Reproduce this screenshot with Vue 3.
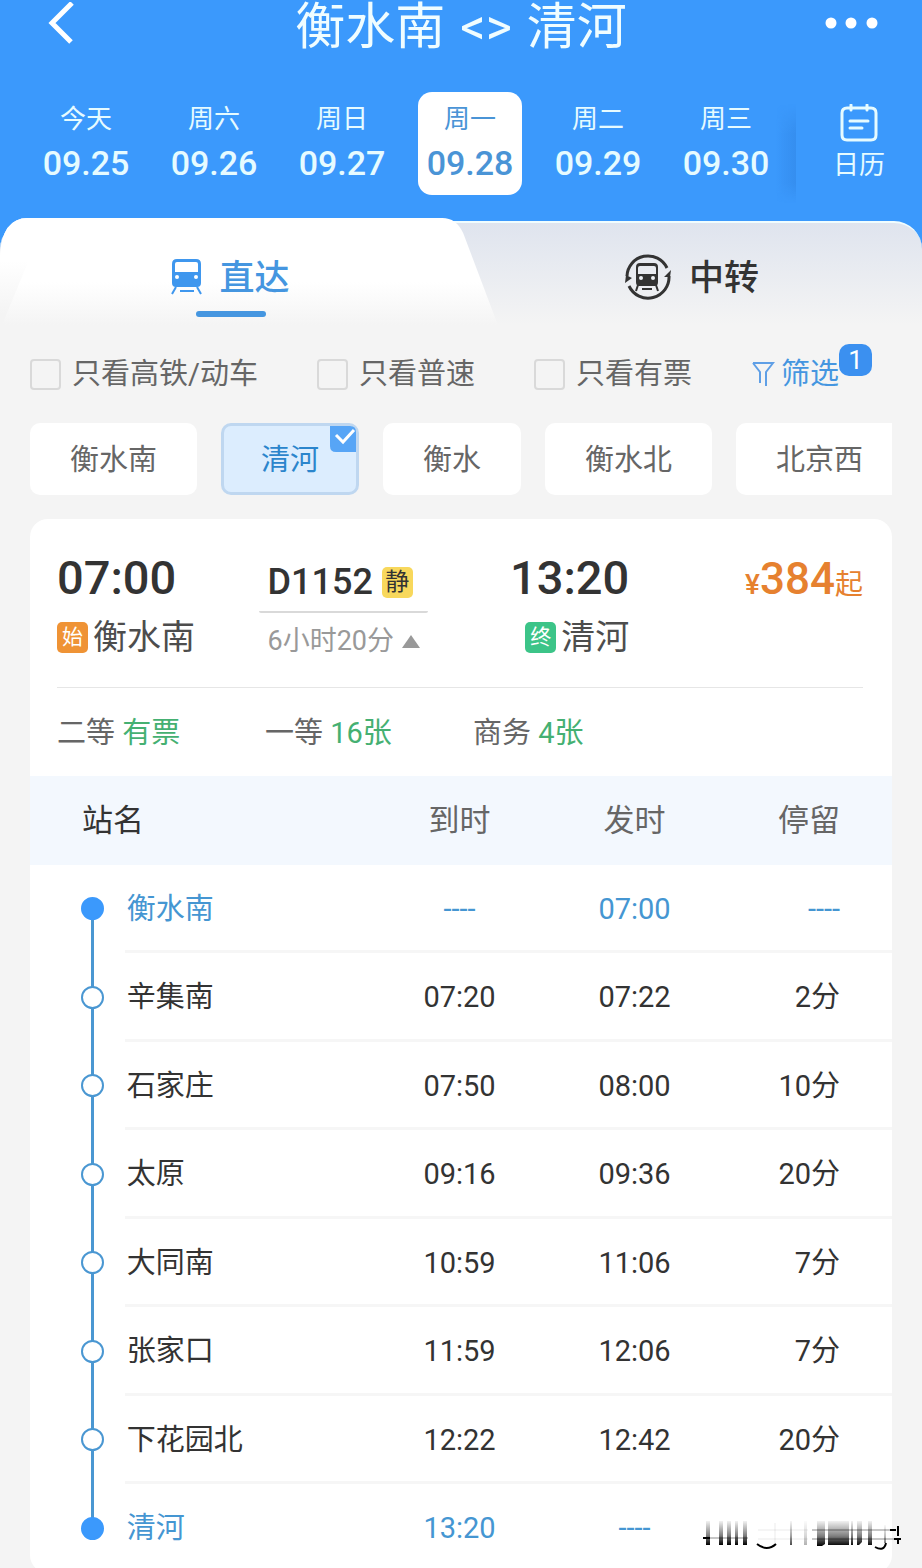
<script setup>
import { ref } from 'vue'

const days = [
  { week: '今天', date: '09.25' },
  { week: '周六', date: '09.26' },
  { week: '周日', date: '09.27' },
  { week: '周一', date: '09.28' },
  { week: '周二', date: '09.29' },
  { week: '周三', date: '09.30' }
]
const activeDay = ref('09.28')

const filters = ref([
  { id: 'fast',   label: '只看高铁/动车', on: false },
  { id: 'normal', label: '只看普速',      on: false },
  { id: 'avail',  label: '只看有票',      on: false }
])

const stations      = ['衡水南', '清河', '衡水', '衡水北', '北京西']
const activeStation = ref('清河')

const seats = [
  { name: '二等', left: '有票' },
  { name: '一等', left: '16张' },
  { name: '商务', left: '4张' }
]

const stops = [
  { name: '衡水南',   arrive: '----',  depart: '07:00', stay: '----', end: true },
  { name: '辛集南',   arrive: '07:20', depart: '07:22', stay: '2分' },
  { name: '石家庄',   arrive: '07:50', depart: '08:00', stay: '10分' },
  { name: '太原',     arrive: '09:16', depart: '09:36', stay: '20分' },
  { name: '大同南',   arrive: '10:59', depart: '11:06', stay: '7分' },
  { name: '张家口',   arrive: '11:59', depart: '12:06', stay: '7分' },
  { name: '下花园北', arrive: '12:22', depart: '12:42', stay: '20分' },
  { name: '清河',     arrive: '13:20', depart: '----',  stay: '',     end: true }
]
</script>

<template>
  <div class="page">
    <header class="header">
      <div class="title-bar">
        <button class="icon-btn" aria-label="返回">
          <svg width="32" height="42" viewBox="0 0 32 42"><path d="M28 1 L8 21 L27 40" fill="none" stroke="#fff" stroke-width="5" /></svg>
        </button>
        <h1 class="title"><span>衡水南</span><span>&lt;&gt;</span><span>清河</span></h1>
        <button class="icon-btn more" aria-label="更多">
          <svg width="54" height="12" viewBox="0 0 54 12" fill="#fff">
            <circle cx="7" cy="6" r="5.5" /><circle cx="27" cy="6" r="5.5" /><circle cx="48" cy="6" r="5.5" />
          </svg>
        </button>
      </div>

      <div class="date-bar">
        <div class="days">
          <button
            v-for="d in days"
            :key="d.date"
            class="day"
            :class="{ active: activeDay === d.date }"
            @click="activeDay = d.date"
          >
            <span class="week">{{ d.week }}</span>
            <span class="date">{{ d.date }}</span>
          </button>
        </div>
        <button class="calendar">
          <svg width="38" height="38" viewBox="0 0 38 38" fill="none" stroke="#e6fbff" stroke-width="3" stroke-linecap="round">
            <path d="M10 4 H7 Q2 4 2 9 V31 Q2 36 7 36 H31 Q36 36 36 31 V9 Q36 4 31 4 H28 M12 4 H26" />
            <path d="M11 1 V6 M27 1 V6" />
            <path d="M10 17 H28 M10 24 H22" />
          </svg>
          <span>日历</span>
        </button>
      </div>
    </header>

    <nav class="tabs">
      <svg class="tab-shape" viewBox="0 0 502 107" preserveAspectRatio="none" aria-hidden="true">
        <defs>
          <linearGradient id="tabFade" x1="0" y1="0" x2="0" y2="1">
            <stop offset="0.6" stop-color="#fff" />
            <stop offset="1" stop-color="#f4f4f4" />
          </linearGradient>
          <linearGradient id="edgeFade" x1="0" y1="0" x2="0" y2="1">
            <stop offset="0.4" stop-color="#fff" />
            <stop offset="0.9" stop-color="#f4f4f4" />
          </linearGradient>
        </defs>
        <path d="M0 38 Q2 0 28 0 H100 V107 H0 Z" fill="url(#edgeFade)" />
        <path d="M0 38 Q2 0 28 0 H446 Q460 0 467 15 L502 107 H2 L30 40 Z" fill="url(#tabFade)" />
      </svg>
      <button class="tab active">
        <span class="tab-label">
          <svg width="31" height="36" viewBox="0 0 31 36">
            <path fill-rule="evenodd" fill="#3f97ee" d="M6 0 H25 Q30 0 30 5 V24 Q30 28 26 28 H5 Q1 28 1 24 V5 Q1 0 6 0 Z M6 3 Q4 3 4 5 V13 H27 V5 Q27 3 25 3 Z" />
            <circle cx="6" cy="18" r="2" fill="#fff" /><circle cx="25" cy="18" r="2" fill="#fff" />
            <path d="M5 28 L1 35 M26 28 L30 35 M9 32 H23" stroke="#3f97ee" stroke-width="2" fill="none" />
          </svg>
          <span>直达</span>
        </span>
        <span class="tab-line"></span>
      </button>
      <button class="tab">
        <span class="tab-label">
          <svg width="48" height="48" viewBox="0 0 48 48">
            <path d="M3 23 A21 21 0 0 1 43 15 M45 23 A21 21 0 0 1 5 33" fill="none" stroke="#333" stroke-width="3" />
            <path d="M1 30 L2 22 L8 25 Z M47 17 L46 24 L40 24 Z" fill="#333" />
            <path fill-rule="evenodd" fill="#333" d="M16 10 H30 Q34 10 34 14 V29 Q34 33 31 33 H15 Q12 33 12 29 V14 Q12 10 16 10 Z M16 13 Q14 13 14 15 V21 H32 V15 Q32 13 30 13 Z" />
            <circle cx="17" cy="25" r="2" fill="#eef1f5" /><circle cx="29" cy="25" r="2" fill="#eef1f5" />
            <path d="M14 32 L12 38 M32 32 L34 38 M18 36 H28" stroke="#333" stroke-width="2" fill="none" />
          </svg>
          <span>中转</span>
        </span>
      </button>
    </nav>

    <main class="content">
      <div class="filters">
        <label v-for="f in filters" :key="f.id" class="check">
          <input v-model="f.on" type="checkbox" />
          <span>{{ f.label }}</span>
        </label>
        <button class="filter-btn">
          <svg width="24" height="26" viewBox="0 0 24 26"><path d="M2 2 H22 L15 11 V25 M2 2 L9 11 V22" fill="none" stroke="#5f9fe6" stroke-width="2" /></svg>
          筛选
          <span class="count">1</span>
        </button>
      </div>

      <div class="chips">
        <button
          v-for="s in stations"
          :key="s"
          class="chip"
          :class="{ active: activeStation === s }"
          @click="activeStation = s"
        >
          {{ s }}
          <svg v-if="activeStation === s" class="tick" width="26" height="26" viewBox="0 0 26 26">
            <path d="M0 0 H20 Q26 0 26 6 V26 H6 Q0 26 0 20 Z" fill="#57a5f6" />
            <path d="M6 9 L13 16 L24 4" fill="none" stroke="#fff" stroke-width="3" />
          </svg>
        </button>
      </div>

      <section class="card">
        <div class="summary">
          <div class="point">
            <span class="time">07:00</span>
            <span class="station"><i class="mark start">始</i>衡水南</span>
          </div>
          <div class="train">
            <span class="number">D1152<i class="mark quiet">静</i></span>
            <span class="duration">
              6小时20分
              <svg width="18" height="13" viewBox="0 0 18 13"><path d="M9 0 L18 13 H0 Z" fill="#999" /></svg>
            </span>
          </div>
          <div class="point right">
            <span class="time">13:20</span>
            <span class="station"><i class="mark stop">终</i>清河</span>
          </div>
          <div class="price"><small>¥</small>384<small>起</small></div>
        </div>

        <div class="seats">
          <span v-for="s in seats" :key="s.name">{{ s.name }} <b>{{ s.left }}</b></span>
        </div>

        <table class="stops">
          <colgroup>
            <col class="c-track" /><col /><col class="c-time" /><col class="c-time" /><col class="c-stay" />
          </colgroup>
          <thead>
            <tr>
              <th colspan="2" class="first">站名</th>
              <th>到时</th>
              <th>发时</th>
              <th class="stay">停留</th>
            </tr>
          </thead>
          <tbody>
            <tr v-for="s in stops" :key="s.name" :class="{ end: s.end }">
              <td class="track"><span class="dot"></span></td>
              <td class="name">{{ s.name }}</td>
              <td>{{ s.arrive }}</td>
              <td>{{ s.depart }}</td>
              <td class="stay">{{ s.stay }}</td>
            </tr>
          </tbody>
        </table>
      </section>
    </main>

    <!-- smeared stamp over the corner of the list -->
    <svg class="stamp" width="200" height="36" viewBox="0 0 200 36" aria-hidden="true">
      <defs>
        <linearGradient id="smear" x1="0" y1="0" x2="0" y2="1">
          <stop offset="0" stop-color="#000" stop-opacity="0.05" />
          <stop offset="0.6" stop-color="#000" stop-opacity="0.5" />
          <stop offset="1" stop-color="#000" />
        </linearGradient>
      </defs>
      <g fill="url(#smear)">
        <path d="M4 4 h4 v24 h-4 Z M17 4 h4 v24 h-4 Z M25 4 h4 v24 h-4 Z M33 4 h3 v24 h-3 Z M41 4 h4 v24 h-4 Z" />
        <path d="M115 4 h8 v23 l-3 2 h-5 Z M126 4 h21 v24 h-21 Z M149 4 h2 v24 h-2 Z M155 4 h5 v21 l-3 3 h-2 Z M166 4 h4 v24 h-4 Z" />
        <path d="M88 4 h2 v24 h-2 Z" opacity="0.7" />
        <path d="M102 4 h3 v24 h-3 Z" opacity="0.3" />
        <path d="M182 8 h2 v18 h-2 Z" opacity="0.5" />
      </g>
      <path d="M2 21 H46 M110 13 H192 M110 22 H192" stroke="#000" stroke-opacity="0.45" />
      <path d="M1 21 H8 M188 13 H194 M192 22 H199" stroke="#000" stroke-width="2" />
      <path d="M55 27 Q65 35 74 27 M173 30 Q182 35 184 26 M196 9 V19 M196 22 V27" fill="none" stroke="#000" stroke-width="2" />
      <path d="M56 13 H106 M56 22 H106 M73 6 V26" stroke="#000" stroke-opacity="0.08" />
    </svg>
  </div>
</template>

<style>
body {
  margin: 0;
  background: #f4f4f4;
}
</style>

<style scoped>
.page {
  position: relative;
  min-height: 100vh;
  overflow: hidden;
  background: #f4f4f4;
  color: #333;
  font-family: Roboto, "Noto Sans CJK SC", sans-serif;
}

button {
  padding: 0;
  border: none;
  background: none;
  color: inherit;
  font: inherit;
  cursor: pointer;
}

svg {
  display: block;
  flex: none;
}

/* Header */
.header {
  background: #3b99fc;
  color: #e6fbff;
}

.title-bar {
  display: grid;
  grid-template-columns: 1fr auto 1fr;
  height: 54px;
  padding: 0 44px;
}

.icon-btn {
  display: flex;
  align-items: center;
  height: 46px;
}
.icon-btn.more { justify-content: flex-end; }

.title {
  display: flex;
  gap: 15px;
  margin: 0;
  color: #f0fdff;
  font-size: 50px;
  font-weight: 400;
  line-height: 54px;
}

.date-bar {
  display: flex;
  justify-content: space-between;
  padding: 38px 0 23px;
}

.days {
  display: flex;
  gap: 24px;
  padding-left: 34px;
}

.day {
  display: flex;
  flex-direction: column;
  align-items: center;
  width: 104px;
  height: 103px;
  padding-top: 9px;
  box-sizing: border-box;
  border-radius: 14px;
}
.day.active { background: #fff; color: #4a94d6; }

.week {
  font-size: 26px;
  line-height: 36px;
}

.date {
  font-size: 34px;
  font-weight: 500;
  line-height: 52px;
}

.calendar {
  position: relative;
  display: flex;
  flex-direction: column;
  align-items: center;
  gap: 5px;
  width: 126px;
  padding-top: 12px;
  box-sizing: border-box;
  font-size: 26px;
  line-height: 36px;
}

.calendar::before {
  content: '';
  position: absolute;
  top: 12px;
  bottom: -8px;
  left: -20px;
  width: 20px;
  background: linear-gradient(to right, transparent, rgba(30, 100, 190, 0.2));
  mask-image: linear-gradient(transparent, #000 30%, #000 80%, transparent);
}

/* Tabs */
.tabs {
  position: relative;
  display: flex;
  height: 107px;
  background: linear-gradient(#3b99fc 50px, #f4f4f4 50px);
}

.tabs::before {
  content: '';
  position: absolute;
  inset: 3px 0 0;
  border-top: 2px solid #f0fdff;
  border-radius: 28px 28px 0 0;
  background: linear-gradient(#dfe4ee, #f4f4f4);
}

.tab-shape {
  position: absolute;
  top: 0;
  left: 0;
  width: 54%;
  height: 100%;
}

.tab {
  position: relative;
  flex: 1;
  display: flex;
  flex-direction: column;
  align-items: center;
  gap: 10px;
  padding-top: 35px;
}

.tab-label {
  display: flex;
  align-items: center;
  gap: 17px;
  height: 48px;
  font-size: 35px;
  font-weight: 500;
  line-height: 48px;
}
.tab-label span { padding-top: 4px; }
.tab.active { color: #4596e0; }

.tab-line {
  width: 70px;
  height: 6px;
  border-radius: 3px;
  background: #4596e0;
}

/* Filters */
.content {
  padding: 24px 30px 0;
}

.filters {
  display: flex;
  align-items: center;
  gap: 59px;
  height: 50px;
  color: #666;
  font-size: 29px;
  line-height: 42px;
}

.check {
  display: flex;
  align-items: center;
  gap: 11px;
}

.check input {
  appearance: none;
  width: 31px;
  height: 31px;
  margin: 0;
  box-sizing: border-box;
  border: 2px solid #d9d9d9;
  border-radius: 4px;
}
.check input:checked { background: #3b99fc; border-color: #3b99fc; }

.filter-btn {
  position: relative;
  display: flex;
  align-items: center;
  gap: 6px;
  color: #4596e0;
}

.count {
  position: absolute;
  left: 100%;
  bottom: 19px;
  width: 33px;
  height: 32px;
  border-radius: 10px;
  background: #3b90f0;
  color: #fff;
  font-size: 26px;
  line-height: 32px;
}

.chips {
  display: flex;
  gap: 24px;
  margin-top: 24px;
  overflow: hidden;
}

.chip {
  position: relative;
  flex: none;
  height: 72px;
  padding: 2px 40px 0;
  border-radius: 10px;
  background: #fff;
  color: #666;
  font-size: 29px;
  line-height: 70px;
}

.chip.active {
  padding: 2px 37px 0;
  border: 3px solid #bfd7f0;
  background: #dcedfe;
  color: #2b85cc;
  line-height: 64px;
}

.tick {
  position: absolute;
  top: 0;
  right: 0;
}

/* Train card */
.card {
  margin-top: 24px;
  overflow: hidden;
  border-radius: 18px;
  background: #fff;
}

.summary {
  display: grid;
  grid-template-columns: 25% 21% 25% 1fr;
  height: 169px;
  margin: 0 29px 0 27px;
  padding-top: 34px;
  box-sizing: border-box;
  border-bottom: 1px solid #e6e6e6;
}

.point {
  display: flex;
  flex-direction: column;
}
.point.right { align-items: flex-end; }

.time {
  font-size: 47px;
  font-weight: 500;
  line-height: 50px;
}

.station {
  display: flex;
  align-items: center;
  gap: 5px;
  margin-top: 9px;
  color: #4d4d4d;
  font-size: 34px;
  line-height: 50px;
}

.mark {
  width: 31px;
  height: 31px;
  border-radius: 5px;
  color: #fff;
  font-size: 21px;
  font-style: normal;
  font-weight: 400;
  line-height: 31px;
  text-align: center;
}
.mark.start { background: #ef9335; }
.mark.stop { background: #3cc488; }
.mark.quiet { background: #f8d85c; color: #333; font-size: 24px; }

.train {
  display: flex;
  flex-direction: column;
}

.number {
  display: flex;
  align-items: center;
  gap: 9px;
  height: 60px;
  padding: 0 9px;
  box-sizing: border-box;
  border-bottom: 2px solid #d9d9d9;
  border-radius: 2px;
  font-size: 36px;
  font-weight: 500;
  line-height: 58px;
}

.duration {
  display: flex;
  align-items: center;
  gap: 8px;
  padding: 10px 0 0 9px;
  color: #999;
  font-size: 27px;
  line-height: 36px;
  white-space: nowrap;
}

.price {
  color: #e6812f;
  font-size: 44px;
  font-weight: 500;
  line-height: 52px;
  text-align: right;
}
.price small { font-size: 28px; }
.price small:last-child { font-weight: 400; }

.seats {
  display: grid;
  grid-template-columns: repeat(3, 208px);
  margin: 0 29px 0 27px;
  padding-top: 2px;
  color: #666;
  font-size: 29px;
  line-height: 86px;
}
.seats b { color: #45b072; font-weight: 400; }

/* Stop list */
.stops {
  width: 100%;
  table-layout: fixed;
  border-collapse: separate;
  border-spacing: 0;
  font-size: 29px;
  line-height: 42px;
  text-align: center;
}

.c-track { width: 11%; }
.c-time { width: 175px; }
.c-stay { width: 170px; }

th {
  height: 89px;
  padding: 0;
  background: #f3f8fe;
  color: #666;
  font-size: 31px;
  font-weight: 400;
}
th.first { padding-left: 52px; color: #333; text-align: left; }

td {
  height: 88px;
  padding: 2px 0 0;
  box-sizing: border-box;
  border-bottom: 3px solid #f6f6f6;
}
tr:nth-child(even) td { height: 89px; }
tr:last-child td { border-bottom-color: transparent; }

td.name { padding-left: 2px; text-align: left; }
th.stay,
td.stay { padding-right: 52px; text-align: right; }
.end td { color: #4596d2; }

td.track {
  position: relative;
  border-bottom-color: transparent;
}

.track::before {
  content: '';
  position: absolute;
  top: 0;
  bottom: -3px;
  left: 61px;
  width: 3px;
  background: #4a97d2;
}
tr:first-child .track::before { top: 50%; }
tr:last-child .track::before { bottom: 50%; }

.dot {
  position: relative;
  display: block;
  width: 23px;
  height: 23px;
  margin-left: 51px;
  box-sizing: border-box;
  border: 2px solid #4a97d2;
  border-radius: 50%;
  background: #fff;
}
.end .dot { border-color: #3b99fc; background: #3b99fc; }

.stamp {
  position: absolute;
  right: 20px;
  top: 1517px;
}
</style>
